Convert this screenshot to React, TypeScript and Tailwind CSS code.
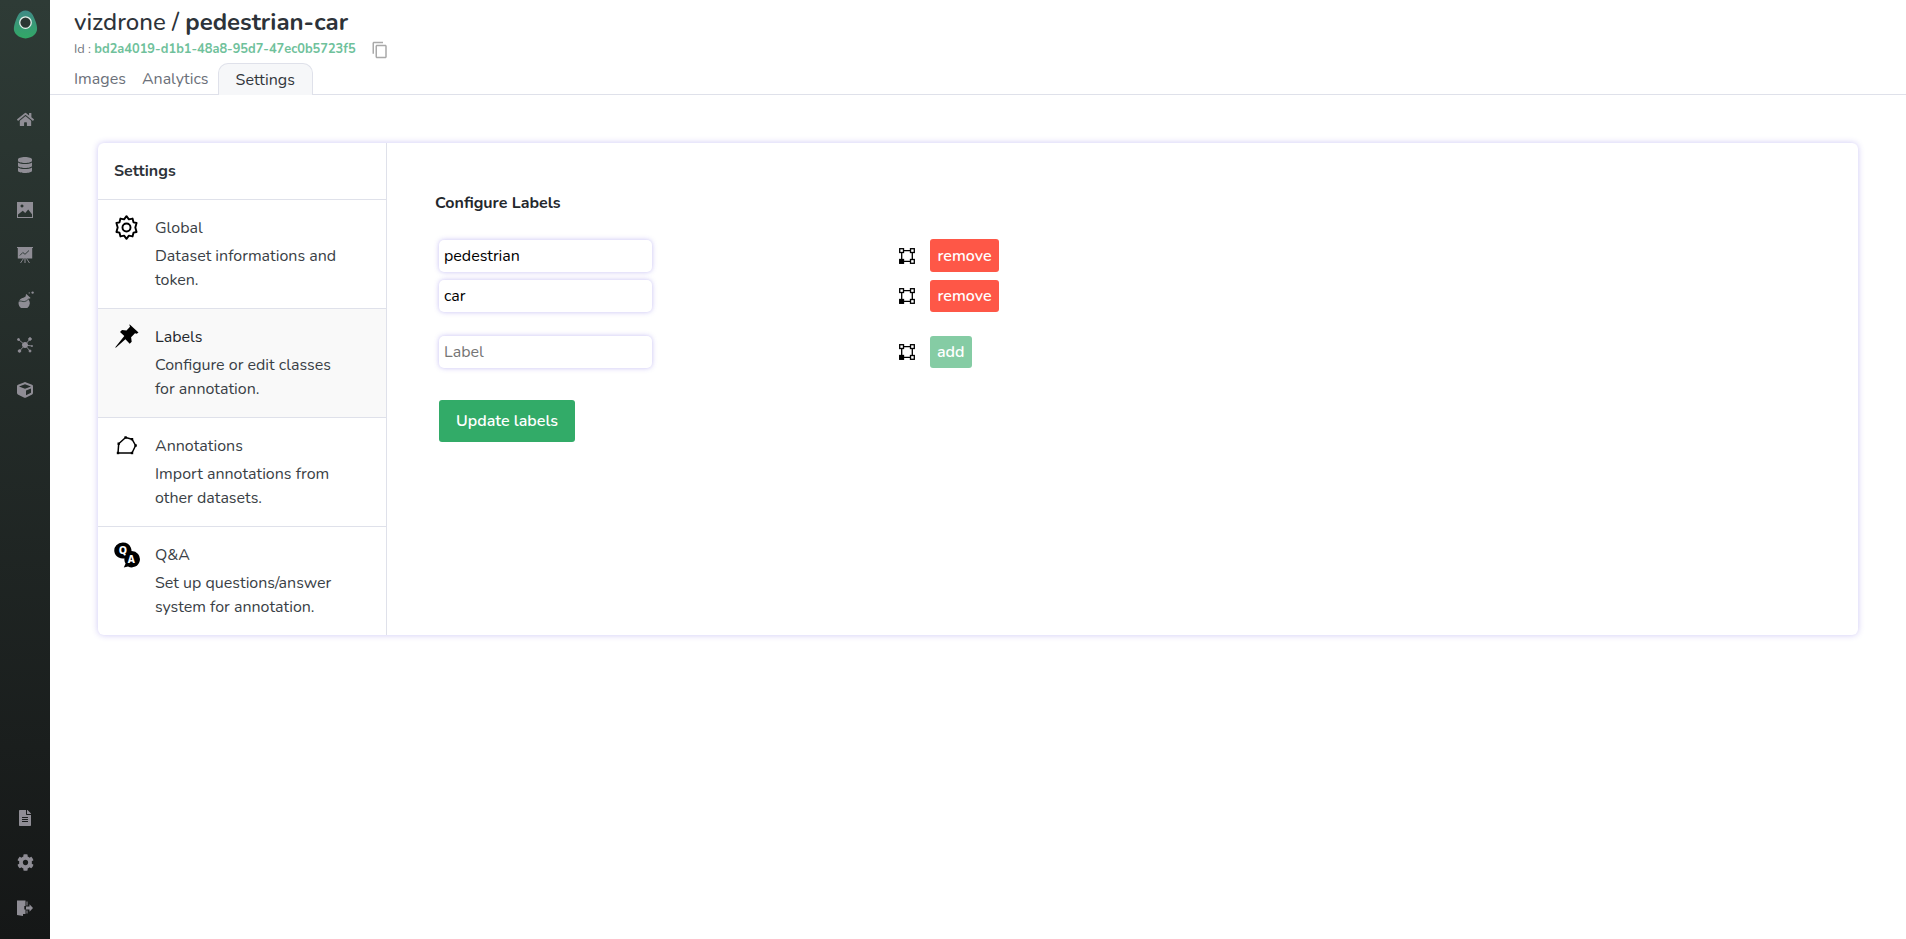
import React from "react";
import { FaHome, FaDatabase, FaFileAlt, FaCog, FaCube } from "react-icons/fa";
import { MdContentCopy } from "react-icons/md";

const font = { fontFamily: '"Nunito", "Noto Sans", "Open Sans", sans-serif' };

function Picture() {
  return (
    <svg viewBox="0 0 16 16" width="16" height="16" fill="currentColor">
      <path fillRule="evenodd" d="M0 0h16v16H0zM1 12.500v2.500h14v-2.800l-3.800-4.700-3 3.600-2.400-2.300zM5 2.500a1.500 1.500 0 1 0 .01 0z" />
    </svg>
  );
}
function Board() {
  return (
    <svg viewBox="0 0 16 16" width="16" height="16" fill="currentColor">
      <path d="M0 0h16v1h-.8v10.500H.8V1H0z" />
      <path d="M2.800 8.500l3-3 2.200 1.800 4-3.800" fill="none" stroke="#2b3733" strokeWidth="0.9" />
      <path d="M7.500 11.500h1V16h-1z" />
      <path d="M6.500 11.500l-3 4.500M9.500 11.500l3 4.500" stroke="currentColor" strokeWidth="0.9" />
    </svg>
  );
}
function Flask() {
  return (
    <svg viewBox="0 0 16 16" width="17" height="17" fill="currentColor">
      <path d="M8.800 2.800l4 3.800-1 .8-.6-.5-.7.8a5.300 5.300 0 1 1-5.600-1.200c1 .1 2-.2 2.800-1l.9-1-.6-.6z" />
      <path d="M1.500 9.700c2-1 3.600.7 5.800.2 1.200-.3 2.300-1 3-1.800" stroke="#2b3733" strokeWidth="0.8" fill="none" />
      <circle cx="14.700" cy="1.500" r="1.100" />
      <circle cx="11.500" cy="1.800" r="0.600" />
    </svg>
  );
}
function Nodes() {
  return (
    <svg viewBox="0 0 16 16" width="16" height="16" fill="currentColor" stroke="currentColor">
      <path d="M8 8L1.500 2.500M8 8l5-6M8 8l7 1M8 8l-5.500 6M8 8l5 6" strokeWidth="0.9" />
      <circle cx="8" cy="8" r="2.500" />
      <circle cx="1.500" cy="2.500" r="1" />
      <circle cx="13" cy="2" r="1.300" />
      <circle cx="15" cy="9" r="0.500" />
      <circle cx="2.500" cy="14" r="1.300" />
      <circle cx="13" cy="14" r="1" />
    </svg>
  );
}
function Exit() {
  return (
    <svg viewBox="0 0 16 16" width="16" height="16" fill="currentColor">
      <path d="M0 0.500h8.500v5.500H7.300v3.500h1.200v4.500H6v2L0 15z" />
      <path d="M9.500 1.500h1v4h-1zM9.500 10.500h1v3h-1z" />
      <path d="M9 6.500h3.500V4.300L16 8l-3.500 3.700V9.500H9z" />
    </svg>
  );
}
function Logo() {
  return (
    <svg viewBox="0 0 26 30" width="25" height="29">
      <defs>
        <linearGradient id="lg" x1="0" y1="0" x2="0" y2="1">
          <stop offset="0" stopColor="#3f8a86" />
          <stop offset="1" stopColor="#32a866" />
        </linearGradient>
      </defs>
      <path d="M13 0.500C19 .5 21.500 6 23.500 12c2 6 2.500 10-1 13.500-2.500 2.600-6 4-9.500 4s-7-1.400-9.500-4C0 22 .5 18 2.500 12 4.500 6 7 .5 13 .5z" fill="url(#lg)" />
      <circle cx="13" cy="13" r="6" fill="#2b3733" stroke="#e6f2ee" strokeWidth="1.300" />
    </svg>
  );
}
function Polygon() {
  return (
    <svg viewBox="0 -2 22 22" width="22" height="22" fill="none" stroke="#000">
      <path d="M2.700 8.700L9.600 2.500 16 4.200l3.600 6.300L16 18H2z" strokeWidth="1.500" strokeLinejoin="round" />
      <g fill="#000" stroke="none">
        <rect x="1.500" y="7.500" width="2.400" height="2.400" />
        <rect x="8.400" y="1.300" width="2.400" height="2.400" />
        <rect x="14.800" y="3" width="2.400" height="2.400" />
        <rect x="18.400" y="9.300" width="2.400" height="2.400" />
        <rect x="14.800" y="16.800" width="2.400" height="2.400" />
        <rect x="0.800" y="16.800" width="2.400" height="2.400" />
      </g>
    </svg>
  );
}
function Gear() {
  return (
    <svg viewBox="0 0 24 26" width="23" height="25" fill="none" stroke="#000" strokeWidth="2" strokeLinejoin="round">
      <path d="M12 1.200l2.500 3.300 3.800-.8 1 3.900 3.200.7-1.300 4.700 1.300 4.700-3.200.7-1 3.900-3.800-.8L12 24.800l-2.500-3.300-3.800.8-1-3.900-3.200-.7L2.800 13 1.500 8.300l3.200-.7 1-3.900 3.800.8z" />
      <circle cx="12" cy="13" r="4.200" />
    </svg>
  );
}
function Pin() {
  return (
    <svg viewBox="0 0 24 24" width="24" height="24" fill="#000">
      <path d="M14.500 0.200l9 8.300-1.800 1.200-1.700-.4-3.900 4 .6 4.400-2 2-4.300-4.500L.800 23.800l-.5-.5L9.300 12 5 8l2-2 4.500.6 3.500-3.900-.5-1.500z" />
    </svg>
  );
}
function QA() {
  return (
    <svg viewBox="0 0 26 26" width="26" height="26">
      <path d="M9 0.500a8.500 8 0 0 1 6 13.600l1 3-4-1.200A8.500 8 0 1 1 9 .5z" fill="#000" />
      <text x="8.800" y="12" textAnchor="middle" fontSize="10.500" fontWeight="800" fill="#fff" fontFamily="Noto Sans, sans-serif">Q</text>
      <path d="M17.500 9a8.200 8.200 0 1 1-3.500 15.500L9.800 25.500l1.800-4A8.200 8.200 0 0 1 17.500 9z" fill="#000" />
      <text x="17.300" y="21.300" textAnchor="middle" fontSize="10" fontWeight="800" fill="#fff" fontFamily="Noto Sans, sans-serif">A</text>
    </svg>
  );
}
function Select() {
  return (
    <svg viewBox="0 0 16 16" width="16" height="16" fill="none" stroke="#000" strokeWidth="1.300">
      <path d="M3 2.700h10M13.300 3v10M3 13.300h10M2.700 3v10" />
      <rect x="0.700" y="0.700" width="3.800" height="3.800" fill="#fff" />
      <rect x="11.500" y="0.700" width="3.800" height="3.800" fill="#fff" />
      <rect x="11.500" y="11.500" width="3.800" height="3.800" fill="#fff" />
      <rect x="0.700" y="11.500" width="3.800" height="3.800" fill="#000" />
    </svg>
  );
}

const side = [
  <FaHome size={17} />,
  <FaDatabase size={16} />,
  <Picture />,
  <Board />,
  <Flask />,
  <Nodes />,
  <FaCube size={16} />,
];
const sideBottom = [<FaFileAlt size={16} />, <FaCog size={17} />, <Exit />];

const rows = [
  { t: "Global", d: ["Dataset informations and", "token."], i: <Gear />, h: "h-[109px] border-b" },
  { t: "Labels", d: ["Configure or edit classes", "for annotation."], i: <Pin />, on: true, h: "h-[109px] border-b" },
  { t: "Annotations", d: ["Import annotations from", "other datasets."], i: <Polygon />, h: "h-[109px] border-b" },
  { t: "Q&A", d: ["Set up questions/answer", "system for annotation."], i: <QA />, h: "h-[108px]" },
];

function Field({ value, placeholder }: { value?: string; placeholder?: string }) {
  return (
    <input
      defaultValue={value}
      placeholder={placeholder}
      className="h-[32px] w-[213px] rounded-[5px] bg-white px-[5px] text-[16px] text-black outline-none shadow-[0_0_5px_rgba(90,70,220,0.35)] placeholder:text-[#757575]"
    />
  );
}

function LabelRow({ value, placeholder, children }: { value?: string; placeholder?: string; children: React.ReactNode }) {
  return (
    <div className="flex items-center">
      <Field value={value} placeholder={placeholder} />
      <div className="mr-[15px] ml-[247px]"><Select /></div>
      {children}
    </div>
  );
}

export default function App() {
  return (
    <div style={font} className="flex h-[939px] w-full overflow-hidden bg-white">
      <aside className="flex w-[50px] shrink-0 flex-col items-center bg-gradient-to-b from-[#2e3b36] to-[#151717] text-[#8f8d95]">
        <div className="mt-[10px] mb-[58px] flex h-[29px] items-center"><Logo /></div>
        <div className="flex flex-col">
          {side.map((s, i) => (
            <div key={i} className="flex h-[45px] w-[50px] items-center justify-center">{s}</div>
          ))}
        </div>
        <div className="mt-auto mb-[9px] flex flex-col">
          {sideBottom.map((s, i) => (
            <div key={i} className="flex h-[45px] w-[50px] items-center justify-center">{s}</div>
          ))}
        </div>
      </aside>
      <main className="flex min-w-0 flex-1 flex-col">
        <header className="h-[95px] shrink-0 border-b border-[#dfe1ea] pl-[24px]">
          <h1 className="pt-[6px] text-[24px] leading-[32px] font-medium text-[#2d3339]">
            vizdrone / <span className="font-bold">pedestrian-car</span>
          </h1>
          <div className="mt-[3px] flex h-[18px] items-center text-[12.800px] text-[#70757c]">
            <span>Id :&nbsp;</span>
            <span className="font-bold text-[#6fc19b]">bd2a4019-d1b1-48a8-95d7-47ec0b5723f5</span>
            <MdContentCopy size={18} className="ml-[15px] text-[#a9a9a9]" />
          </div>
          <nav className="mt-[4px] flex h-[32px] items-end text-[16px] text-[#6b7079]">
            <div className="flex h-full items-center pb-[1px]">Images</div>
            <div className="ml-[16px] flex h-full items-center pb-[1px]">Analytics</div>
            <div className="ml-[9px] flex h-full items-center rounded-t-[10px] border border-b-0 border-[#dfe1ea] bg-[#f6f7f9] px-[17px] text-[#32363c]">Settings</div>
          </nav>
        </header>
        <section className="px-[48px] pt-[48px]">
          <div className="flex h-[492px] overflow-hidden rounded-[6px] bg-white shadow-[0_0_6px_rgba(90,70,220,0.3)]">
            <div className="w-[289px] shrink-0 border-r border-[#dfe1ea]">
              <div className="flex h-[57px] items-center border-b border-[#dfe1ea] pl-[16px] text-[16px] font-bold text-[#2d3339]">Settings</div>
              {rows.map((r) => (
                <div key={r.t} className={`flex border-[#dfe1ea] ${r.h} ${r.on ? "bg-[#f9f9f9]" : ""}`}>
                  <div className="flex w-[57px] shrink-0 justify-center pt-[15px]">{r.i}</div>
                  <div className="pt-[16px] text-[16px] leading-[24px] text-[#3a3f46]">
                    <div className={`mb-[4px] ${r.on ? "text-[#24282d]" : ""}`}>{r.t}</div>
                    {r.d.map((l) => <div key={l}>{l}</div>)}
                  </div>
                </div>
              ))}
            </div>
            <div className="flex-1 pl-[48px]">
              <h2 className="pt-[49px] text-[16px] leading-[22px] font-bold text-[#24282d]">Configure Labels</h2>
              <div className="mt-[25px] ml-[4px] flex flex-col">
                <div className="flex flex-col gap-[8px]">
                  <LabelRow value="pedestrian">
                    <button className="h-[33px] rounded-[3px] bg-[#fe5747] px-[7.500px] text-[16px] font-semibold text-white">remove</button>
                  </LabelRow>
                  <LabelRow value="car">
                    <button className="h-[32px] rounded-[3px] bg-[#fe5747] px-[7.500px] text-[16px] font-semibold text-white">remove</button>
                  </LabelRow>
                </div>
                <div className="mt-[24px]">
                  <LabelRow placeholder="Label">
                    <button className="h-[32px] rounded-[3px] bg-[#85cca4] px-[7px] text-[16px] font-semibold text-white">add</button>
                  </LabelRow>
                </div>
                <button className="mt-[32px] h-[42px] w-[136px] rounded-[3px] bg-[#32ab68] text-[16px] font-semibold text-white">Update labels</button>
              </div>
            </div>
          </div>
        </section>
      </main>
    </div>
  );
}
